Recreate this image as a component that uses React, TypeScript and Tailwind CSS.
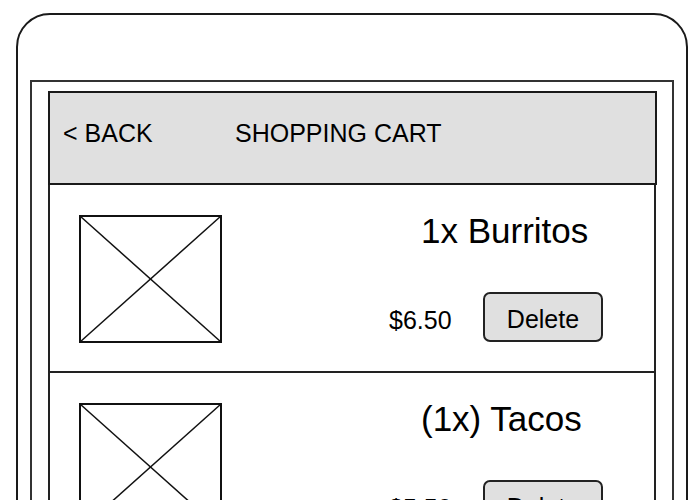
import React from "react";

function Placeholder() {
  return (
    <svg width="143" height="128" viewBox="0 0 143 128" className="block shrink-0">
      <rect x="1" y="1" width="141" height="126" fill="white" stroke="#111" strokeWidth="2" />
      <line x1="1" y1="1" x2="142" y2="127" stroke="#111" strokeWidth="1.5" />
      <line x1="142" y1="1" x2="1" y2="127" stroke="#111" strokeWidth="1.5" />
    </svg>
  );
}

function Row({ title, price }: { title: string; price: string }) {
  return (
    <div className="h-[188px] border-b-2 border-[#222] flex items-start pt-[28px] pl-[29px]">
      <div className="mt-[2px]">
        <Placeholder />
      </div>
      <div className="ml-[167px] flex flex-col">
        <div className="pl-[32px] text-[35px] leading-none h-[34px] whitespace-nowrap">{title}</div>
        <div className="mt-[45px] flex items-center">
          <span className="w-[94px] text-[25px] leading-none mt-[6px] whitespace-nowrap">{price}</span>
          <button className="w-[120px] h-[50px] border-2 border-[#222] rounded-[7px] bg-[#e0e0e0] text-[25px] leading-none pt-[4px] text-black">
            Delete
          </button>
        </div>
      </div>
    </div>
  );
}

export default function App() {
  return (
    <div
      className="w-[700px] h-[500px] overflow-hidden bg-white text-black"
      style={{ fontFamily: '"Liberation Sans", Arial, sans-serif' }}
    >
      <div className="ml-[16px] mt-[13px] w-[672px] h-[700px] border-2 border-[#1a1a1a] rounded-[34px] px-[12px] pt-[65px]">
        <div className="w-[644px] h-[600px] border-2 border-[#333] pl-[16px] pr-[15px] pt-[9px]">
          <div className="w-[609px] h-[94px] border-2 border-[#1a1a1a] bg-[#e0e0e0] flex items-start pl-[13px] pt-[28px]">
            <span className="w-[172px] text-[25px] leading-none whitespace-nowrap">&lt; BACK</span>
            <span className="text-[25px] leading-none whitespace-nowrap">SHOPPING CART</span>
          </div>
          <div className="w-[608px] border-x-2 border-[#222]">
            <Row title="1x Burritos" price="$6.50" />
            <Row title="(1x) Tacos" price="$5.50" />
          </div>
        </div>
      </div>
    </div>
  );
}
